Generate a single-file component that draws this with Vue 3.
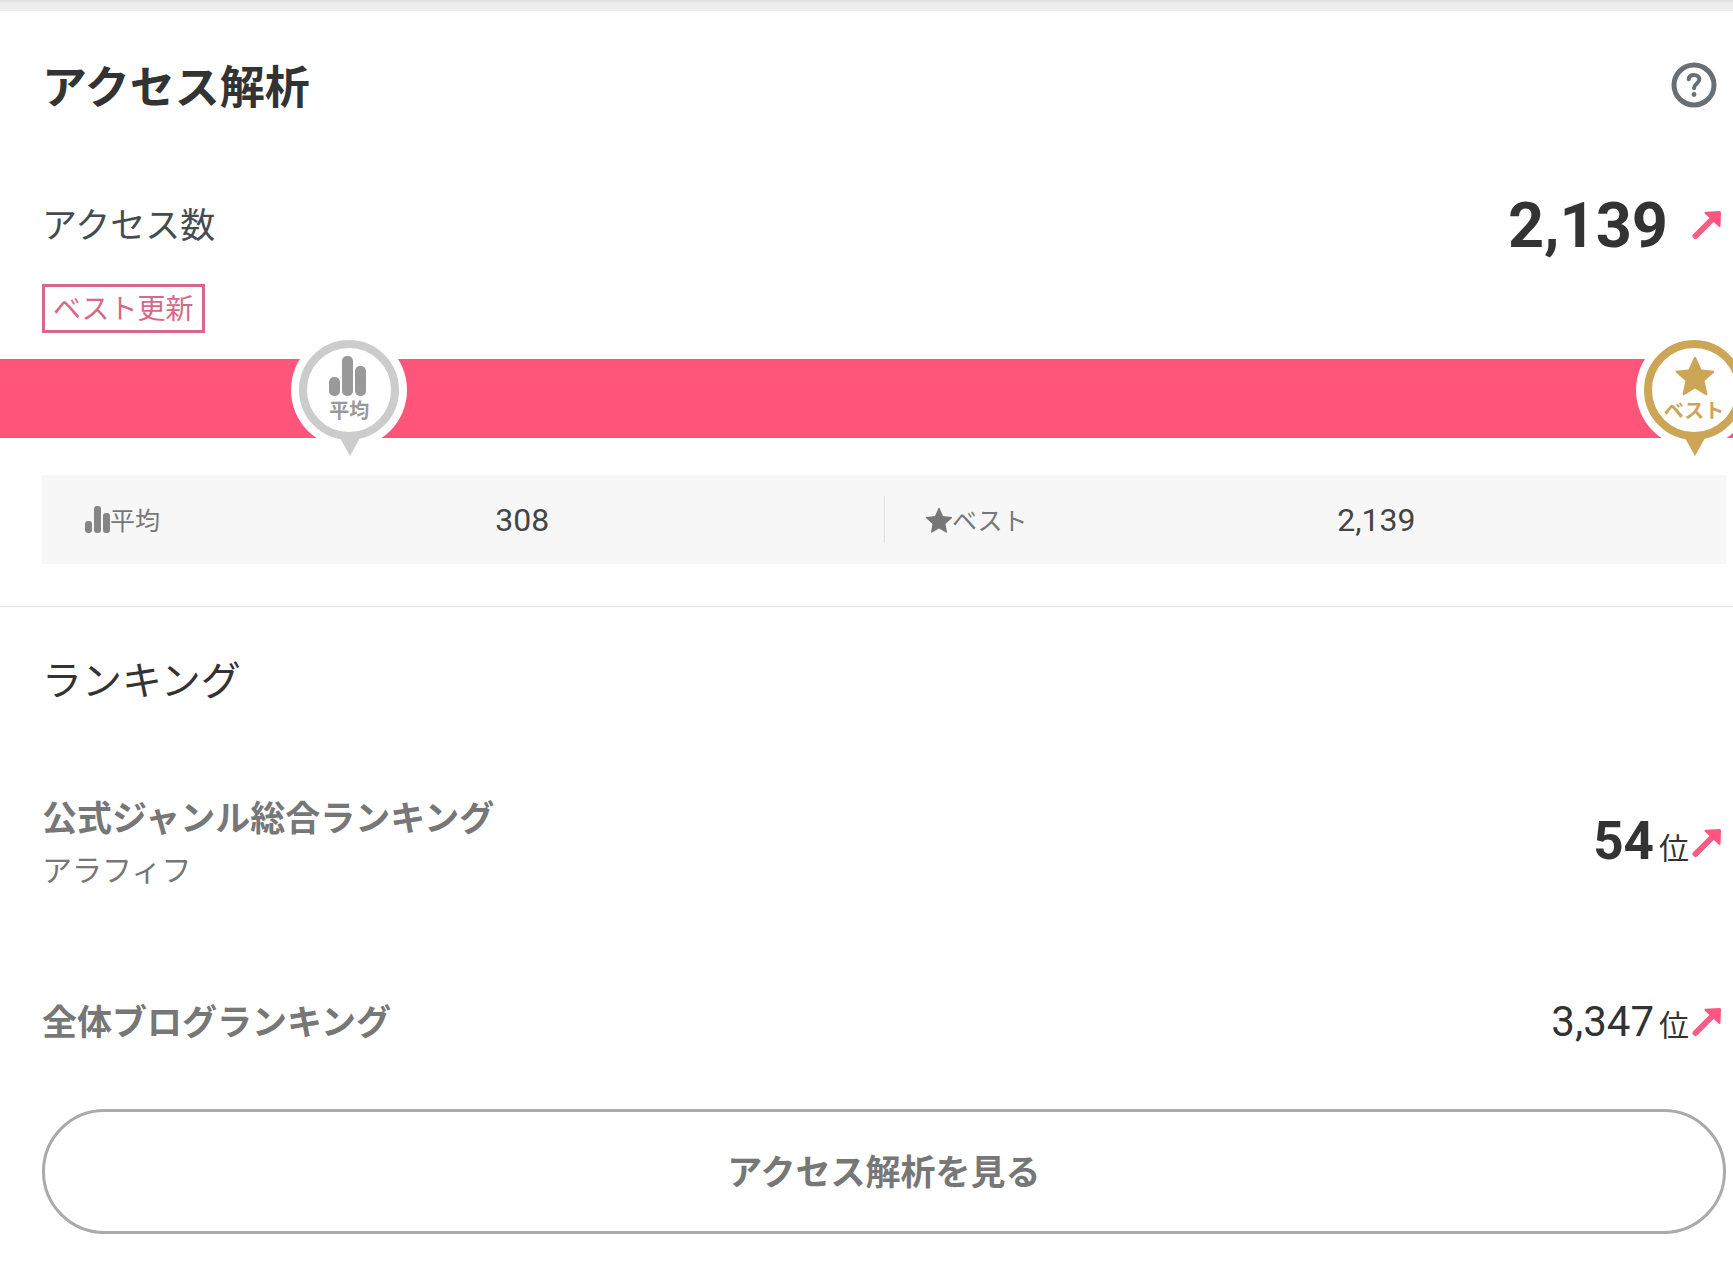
<script setup>
import { ref } from 'vue'

const access = ref({ total: 2139, average: 308, best: 2139 })

const markers = ref([
  { id: 'average', label: '平均', position: 20.15 },
  { id: 'best', label: 'ベスト', position: 97.75 },
])

const rankings = ref([
  { title: '公式ジャンル総合ランキング', genre: 'アラフィフ', rank: 54, strong: true },
  { title: '全体ブログランキング', genre: '', rank: 3347, strong: false },
])

function format(value) {
  return value.toLocaleString('en-US')
}
</script>

<template>
  <main class="analytics">
    <header class="header">
      <h1>アクセス解析</h1>
      <button class="help" type="button" aria-label="ヘルプ">
        <svg width="46" height="46" viewBox="0 0 46 46" fill="none" stroke="#686f75">
          <circle cx="23" cy="23" r="20" stroke-width="5" />
          <path d="M17.7 17.2c.3-2.600 2.400-4.200 5.300-4.200 3 0 5.300 1.700 5.300 4.300 0 4.200-5.300 4.200-5.300 9" stroke-width="4" stroke-linecap="round" />
          <circle cx="23" cy="32.500" r="2.400" fill="#686f75" stroke="none" />
        </svg>
      </button>
    </header>

    <section>
      <div class="access-row">
        <h2>アクセス数</h2>
        <div class="total">
          <strong>{{ format(access.total) }}</strong>
          <svg class="arrow" width="30" height="30" viewBox="0 0 30 30">
            <path d="M3.500 26L21 8.500" stroke="#f45d86" stroke-width="6" stroke-linecap="round" />
            <path d="M13.500 1.800L27.500 1q1.500 0 1.500 1.500L28.500 16q-.3 1.800-1.700.700L12.800 3.600q-1-1.500.7-1.800z" fill="#ff557e" />
          </svg>
        </div>
      </div>
      <span class="badge">ベスト更新</span>

      <div class="bar">
        <div
          v-for="marker in markers"
          :key="marker.id"
          class="marker"
          :class="marker.id"
          :style="{ left: marker.position + '%' }"
        >
          <svg v-if="marker.id === 'average'" class="marker-icon" width="40" height="40" viewBox="0 0 40 40" fill="#999">
            <rect x="0" y="21" width="11" height="19" rx="5" />
            <rect x="13" y="0" width="11" height="40" rx="5" />
            <rect x="26" y="10" width="11" height="30" rx="5" />
          </svg>
          <svg v-else class="marker-icon" width="40" height="40" viewBox="0 0 40 40" fill="#cda557">
            <path d="M20 1.500q1-1.500 2 0l5.500 12 12.500 1.300q1 .700 0 1.700l-9.500 8.500 3 13q0 1.500-2 1L21 32.500 10.500 39q-2 .500-2-1l3-13L2 16.500q-1-1 0-1.700l12.500-1.300z" />
          </svg>
          <span>{{ marker.label }}</span>
        </div>
      </div>

      <dl class="stats">
        <div class="stat">
          <dt>
            <svg width="26" height="27" viewBox="0 0 26 27" fill="#858585">
              <rect x="1" y="15" width="7" height="12" rx="3" />
              <rect x="10" y="0" width="7" height="27" rx="3" />
              <rect x="19" y="7" width="7" height="20" rx="3" />
            </svg>
            <span>平均</span>
          </dt>
          <dd>{{ format(access.average) }}</dd>
        </div>
        <div class="stat">
          <dt>
            <svg width="26" height="26" viewBox="0 0 26 26" fill="#777">
              <path d="M12.500 1q.5-1 1 0l3.500 8 8.500 1q1 .500 0 1.500L19.500 17l1.500 8q0 1-1 .500l-7-4-7 4q-1 .500-1-.500l1.500-8L.500 11.500q-1-1 0-1.500L9 9z" />
            </svg>
            <span>ベスト</span>
          </dt>
          <dd>{{ format(access.best) }}</dd>
        </div>
      </dl>
    </section>

    <section class="ranking">
      <h2>ランキング</h2>
      <ul>
        <li v-for="item in rankings" :key="item.title">
          <div class="name">
            <h3>{{ item.title }}</h3>
            <p v-if="item.genre">{{ item.genre }}</p>
          </div>
          <div class="rank">
            <span class="place">
              <span class="number" :class="{ strong: item.strong }">{{ format(item.rank) }}</span>
              <span class="unit">位</span>
            </span>
            <svg class="arrow" width="30" height="30" viewBox="0 0 30 30">
              <path d="M3.500 26L21 8.500" stroke="#f45d86" stroke-width="6" stroke-linecap="round" />
              <path d="M13.500 1.800L27.500 1q1.500 0 1.500 1.500L28.500 16q-.3 1.800-1.700.700L12.800 3.600q-1-1.500.7-1.800z" fill="#ff557e" />
            </svg>
          </div>
        </li>
      </ul>
      <button class="more" type="button">アクセス解析を見る</button>
    </section>
  </main>
</template>

<style>
body {
  margin: 0;
  background: #fff;
}
</style>

<style scoped>
.analytics {
  overflow: hidden;
  padding-bottom: 28px;
  font-family: Roboto, "Noto Sans CJK JP", sans-serif;
  color: #333;
}

.analytics::before {
  content: "";
  display: block;
  height: 11px;
  background: linear-gradient(#dedede, #ededed 3px);
}

h1, h2, h3, p, ul, dl, dd {
  margin: 0;
  padding: 0;
}

svg {
  display: block;
  flex: none;
}

.header {
  display: flex;
  align-items: center;
  justify-content: space-between;
  padding: 41px 16px 43px 42px;
}

h1 {
  padding-top: 8px;
  font-size: 45px;
  line-height: 58px;
}

.help {
  padding: 0;
  border: none;
  background: none;
  cursor: pointer;
}

.access-row {
  display: flex;
  align-items: center;
  justify-content: space-between;
  padding: 20px 11px 15px 42px;
}

.access-row h2 {
  padding-bottom: 6px;
  font-size: 35px;
  font-weight: 400;
  color: #454c50;
}

.total {
  display: flex;
  align-items: center;
  gap: 24px;
}

.total strong {
  padding-top: 2px;
  font-size: 63px;
  line-height: 86px;
}

.badge {
  display: block;
  width: fit-content;
  margin-left: 42px;
  padding: 2px 8px 0;
  border: 3px solid #d6688a;
  color: #d6688a;
  font-size: 28px;
  line-height: 41px;
}

.bar {
  position: relative;
  height: 79px;
  margin-top: 26px;
  background: #ff557b;
}

.marker {
  position: absolute;
  top: 50%;
  display: flex;
  flex-direction: column;
  align-items: center;
  box-sizing: border-box;
  width: 100px;
  height: 100px;
  margin: -59px 0 0 -50px;
  padding-top: 8px;
  border: 8px solid #ccc;
  border-radius: 50%;
  background: #fff;
  box-shadow: 0 0 0 8px #fff;
  color: #999;
  font-size: 20px;
  font-weight: 700;
  line-height: 30px;
  white-space: nowrap;
}

.marker::after {
  content: "";
  position: absolute;
  top: 90px;
  left: 33px;
  border: solid transparent;
  border-width: 18px 10px 0;
  border-top-color: #ccc;
}

.marker.best {
  border-color: #cda557;
  color: #cda557;
}

.marker.best::after {
  border-top-color: #cda557;
}

.stats {
  display: flex;
  margin: 37px 7px 42px 42px;
  padding: 21px 0;
  background: #f7f7f7;
}

.stat {
  display: flex;
  flex: 1;
  align-items: center;
  padding-left: 42px;
}

.stat + .stat {
  box-shadow: inset 1px 0 #e0e0e0;
}

.stat dt {
  display: flex;
  align-items: center;
  width: 51.4%;
  font-size: 25px;
  color: #777;
}

.stat dt span {
  padding-bottom: 2px;
}

.stat dd {
  padding-top: 2px;
  font-size: 32px;
  line-height: 45px;
  color: #444;
}

.ranking {
  border-top: 1px solid #e0e0e0;
}

.ranking h2 {
  padding: 45px 42px 39px;
  font-size: 40px;
  font-weight: 400;
  line-height: 60px;
}

ul {
  list-style: none;
}

li {
  display: flex;
  align-items: center;
  justify-content: space-between;
  padding: 39px 11px 39px 42px;
}

.name {
  padding-top: 4px;
}

h3 {
  font-size: 35px;
  line-height: 52px;
  color: #777;
}

li p {
  font-size: 30px;
  line-height: 50px;
  color: #777;
}

.rank {
  display: flex;
  align-items: center;
  gap: 3px;
}

.place {
  display: flex;
  align-items: baseline;
  gap: 5px;
  padding-top: 4px;
  line-height: 88px;
}

.number {
  font-size: 42px;
}

.number.strong {
  font-size: 53px;
  font-weight: 700;
}

.unit {
  font-size: 30px;
}

.more {
  display: block;
  width: calc(100% - 49px);
  margin: 0 7px 0 42px;
  padding: 35px 0 31px;
  border: 3px solid #aaa;
  border-radius: 63px;
  background: #fff;
  color: #777;
  font-family: inherit;
  font-size: 35px;
  font-weight: 700;
  line-height: 53px;
  cursor: pointer;
}
</style>
